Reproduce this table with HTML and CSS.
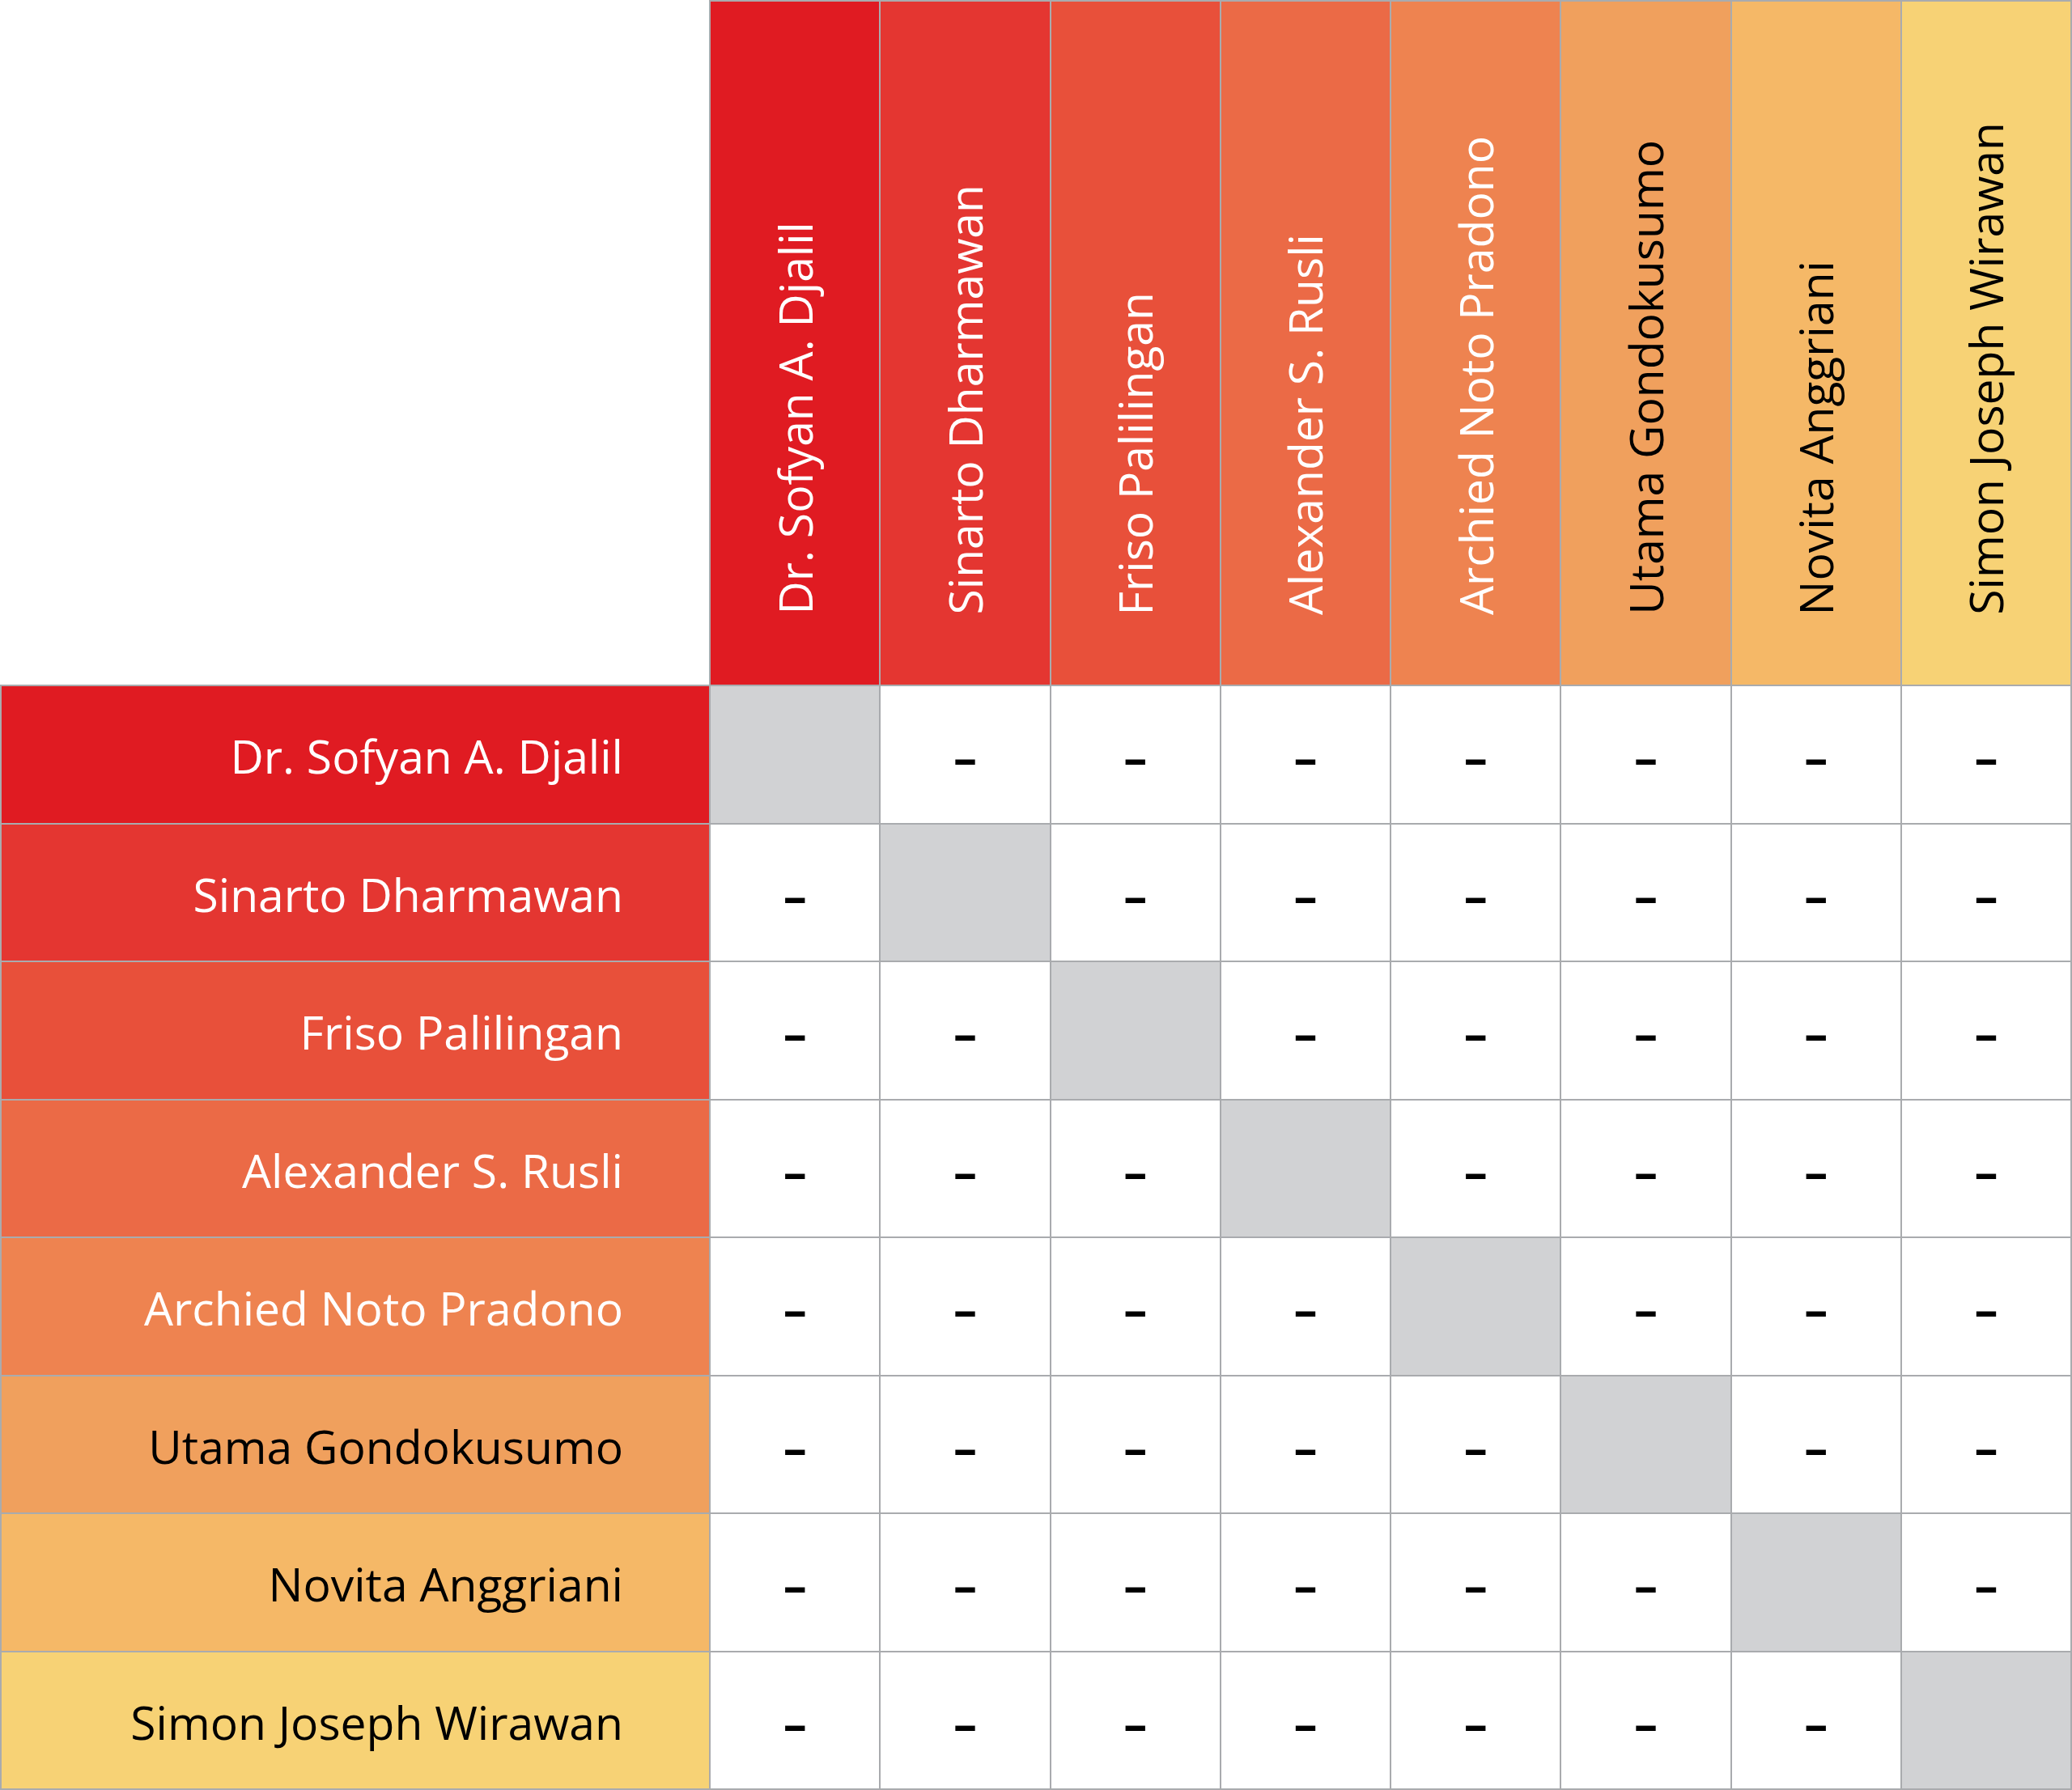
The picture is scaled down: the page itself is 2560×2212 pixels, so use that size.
FILE: index.html
```html
<!DOCTYPE html>
<html lang="id">
<head>
<meta charset="utf-8">
<title>Matrix</title>
<link rel="stylesheet" href="styles.css">
</head>
<body>
<div class="matrix">
  <div class="corner"></div>
  <div class="colhead c1"><span>Dr. Sofyan A. Djalil</span></div>
  <div class="colhead c2"><span>Sinarto Dharmawan</span></div>
  <div class="colhead c3"><span>Friso Palilingan</span></div>
  <div class="colhead c4"><span>Alexander S. Rusli</span></div>
  <div class="colhead c5"><span>Archied Noto Pradono</span></div>
  <div class="colhead c6 dark"><span>Utama Gondokusumo</span></div>
  <div class="colhead c7 dark"><span>Novita Anggriani</span></div>
  <div class="colhead c8 dark"><span>Simon Joseph Wirawan</span></div>

  <div class="rowhead c1">Dr. Sofyan A. Djalil</div>
  <div class="cell self"></div><div class="cell">–</div><div class="cell">–</div><div class="cell">–</div><div class="cell">–</div><div class="cell">–</div><div class="cell">–</div><div class="cell">–</div>

  <div class="rowhead c2">Sinarto Dharmawan</div>
  <div class="cell">–</div><div class="cell self"></div><div class="cell">–</div><div class="cell">–</div><div class="cell">–</div><div class="cell">–</div><div class="cell">–</div><div class="cell">–</div>

  <div class="rowhead c3">Friso Palilingan</div>
  <div class="cell">–</div><div class="cell">–</div><div class="cell self"></div><div class="cell">–</div><div class="cell">–</div><div class="cell">–</div><div class="cell">–</div><div class="cell">–</div>

  <div class="rowhead c4">Alexander S. Rusli</div>
  <div class="cell">–</div><div class="cell">–</div><div class="cell">–</div><div class="cell self"></div><div class="cell">–</div><div class="cell">–</div><div class="cell">–</div><div class="cell">–</div>

  <div class="rowhead c5">Archied Noto Pradono</div>
  <div class="cell">–</div><div class="cell">–</div><div class="cell">–</div><div class="cell">–</div><div class="cell self"></div><div class="cell">–</div><div class="cell">–</div><div class="cell">–</div>

  <div class="rowhead c6 dark">Utama Gondokusumo</div>
  <div class="cell">–</div><div class="cell">–</div><div class="cell">–</div><div class="cell">–</div><div class="cell">–</div><div class="cell self"></div><div class="cell">–</div><div class="cell">–</div>

  <div class="rowhead c7 dark">Novita Anggriani</div>
  <div class="cell">–</div><div class="cell">–</div><div class="cell">–</div><div class="cell">–</div><div class="cell">–</div><div class="cell">–</div><div class="cell self"></div><div class="cell">–</div>

  <div class="rowhead c8 dark">Simon Joseph Wirawan</div>
  <div class="cell">–</div><div class="cell">–</div><div class="cell">–</div><div class="cell">–</div><div class="cell">–</div><div class="cell">–</div><div class="cell">–</div><div class="cell self"></div>
</div>
</body>
</html>
```

FILE: styles.css
```css
html, body {
  margin: 0;
  padding: 0;
  background: #ffffff;
}

.matrix {
  width: 2560px;
  height: 2212px;
  display: grid;
  grid-template-columns: 878px repeat(8, 1fr);
  grid-template-rows: 848px repeat(8, 1fr);
  font-family: "Open Sans", "Noto Sans", sans-serif;
  color: #ffffff;
}

.matrix > div {
  box-sizing: border-box;
  border-right: 2px solid #a9abae;
  border-bottom: 2px solid #a9abae;
}

.corner {
  background: #ffffff;
}

.colhead {
  border-top: 2px solid #a9abae;
  display: flex;
  flex-direction: column;
  justify-content: flex-end;
  align-items: center;
  padding-bottom: 86px;
}

.colhead span {
  writing-mode: vertical-rl;
  transform: rotate(180deg);
  font-size: 57px;
  line-height: 1;
  white-space: nowrap;
}

.rowhead {
  border-left: 2px solid #a9abae;
  display: flex;
  align-items: center;
  justify-content: flex-end;
  padding-right: 106px;
  padding-top: 5px;
  font-size: 57px;
  line-height: 1;
  white-space: nowrap;
}

.cell {
  background: #ffffff;
  color: #000000;
  display: flex;
  align-items: center;
  justify-content: center;
  font-size: 58px;
  font-weight: 700;
  line-height: 1;
  padding-top: 6px;
}

.cell.self {
  background: #d1d2d4;
}

.dark {
  color: #000000;
}

.c1 { background: #e01b22; }
.c2 { background: #e43631; }
.c3 { background: #e8503a; }
.c4 { background: #eb6a46; }
.c5 { background: #ee8350; }
.c6 { background: #f0a05d; }
.c7 { background: #f5b867; }
.c8 { background: #f7d275; }
```
